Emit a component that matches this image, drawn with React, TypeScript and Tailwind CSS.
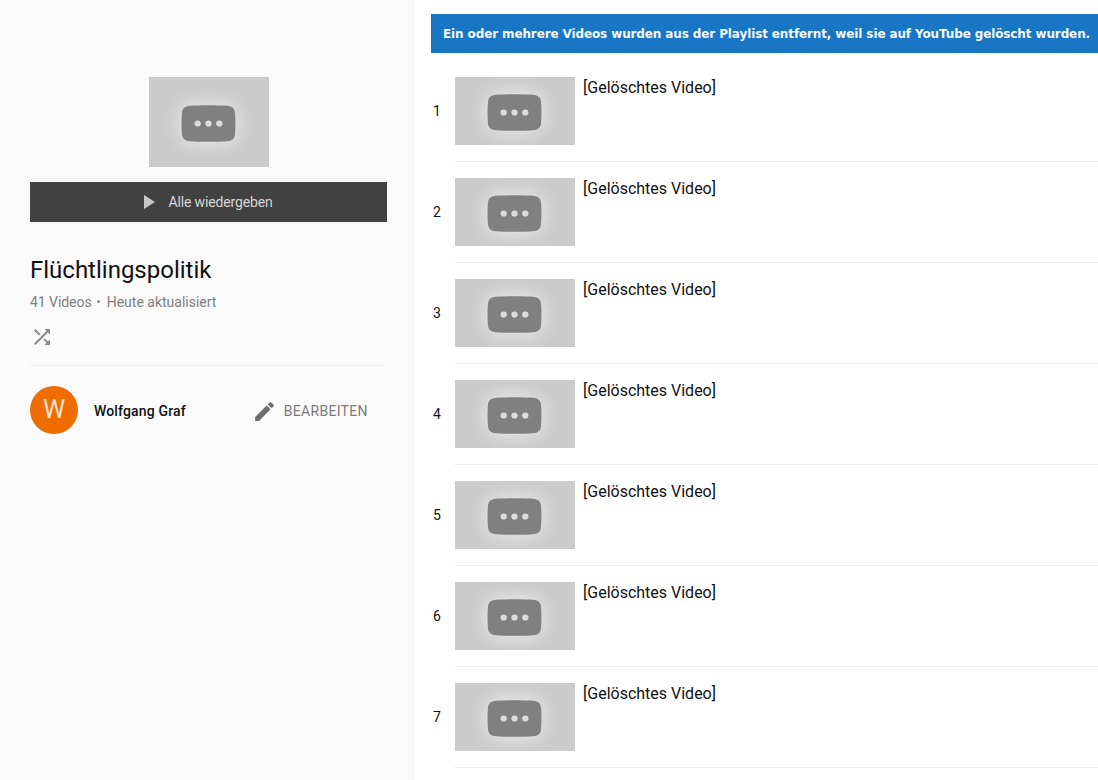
const rows = [1, 2, 3, 4, 5, 6, 7];

function DeletedIcon({ className }: { className: string }) {
  return (
    <svg viewBox="0 0 56 38" preserveAspectRatio="none" className={className}>
      <path
        d="M9 .8C18 .1 38 .1 47 .8c5 .4 7.6 2.6 8 7.2.6 6 .6 16 0 22-.4 4.600-3 6.800-8 7.200-9 .7-29 .7-38 0-5-.4-7.600-2.600-8-7.200C.4 24 .4 14 1 8 1.400 3.400 4 1.200 9 .8z"
        fill="#808080"
      />
      <circle cx="17" cy="19" r="3.200" fill="#dcdcdc" />
      <circle cx="28" cy="19" r="3.200" fill="#dcdcdc" />
      <circle cx="39" cy="19" r="3.200" fill="#dcdcdc" />
    </svg>
  );
}

function Thumb({ tall }: { tall?: boolean }) {
  return (
    <div
      className={`flex w-[120px] shrink-0 items-center justify-center bg-[#cbcbcb] ${
        tall ? "h-[90px]" : "h-[68px]"
      }`}
    >
      <DeletedIcon className="mt-[3px] mr-[2px] h-[37px] w-[55px] drop-shadow-[0_0_10px_rgba(255,255,255,0.75)]" />
    </div>
  );
}

export default function App() {
  return (
    <div className="flex h-[780px] w-[1098px] overflow-hidden bg-white font-['Roboto',sans-serif] text-[#111]">
      <aside className="h-full w-[415px] shrink-0 bg-[#fafafa] pl-[30px] pr-[28px] pt-[77px]">
        <div className="flex justify-center pl-[1px]">
          <Thumb tall />
        </div>
        <div className="mt-[15px] flex h-[40px] w-[357px] items-center justify-center bg-[#414141] text-[14px] tracking-[-0.15px] text-[#d6d6d6]">
          <svg viewBox="0 0 11 14" className="mr-[13px] h-[14px] w-[11px]">
            <path d="M0 0l11 7-11 7z" fill="#c8c8c8" />
          </svg>
          Alle wiedergeben
        </div>
        <h1 className="mt-[33px] text-[24px] leading-[30px] font-normal text-[#111]">Flüchtlingspolitik</h1>
        <div className="mt-[7px] flex h-[20px] items-center text-[14px] text-[#808080]">
          <span className="tracking-[-0.05px]">41 Videos</span>
          <span className="mx-[5px] text-[12px]">•</span>
          <span className="ml-[1px]">Heute aktualisiert</span>
        </div>
        <svg viewBox="0 0 24 24" className="mt-[13px] h-[24px] w-[24px]" fill="#8a8a8a">
          <path d="M10.590 9.170L5.410 4 4 5.410l5.170 5.170 1.420-1.410zM14.500 4l2.040 2.040L4 18.590 5.410 20 17.960 7.460 20 9.500V4h-5.500zm.330 9.410l-1.410 1.410 3.130 3.130L14.500 20H20v-5.500l-2.040 2.040-3.130-3.130z" />
        </svg>
        <div className="mt-[16px] h-px w-[353px] bg-[#ececec]" />
        <div className="mt-[20px] flex h-[48px] w-[357px] items-center">
          <div className="flex h-[48px] w-[48px] items-center justify-center rounded-full bg-[#ef6c00] text-[25px] text-[#fbe3cd]">
            W
          </div>
          <span className="mt-[2px] ml-[16px] text-[14px] font-medium tracking-[0.15px] text-[#111]">Wolfgang Graf</span>
          <svg viewBox="0 0 24 24" className="mt-[2px] ml-[66px] h-[25px] w-[25px]" fill="#6e6e6e">
            <path d="M3 17.250V21h3.750L17.810 9.940l-3.750-3.750L3 17.250zM20.710 7.040a1 1 0 0 0 0-1.410l-2.340-2.340a1 1 0 0 0-1.410 0l-1.830 1.830 3.750 3.750 1.830-1.830z" />
          </svg>
          <span className="mt-[2px] ml-[7px] text-[14px] tracking-[0.3px] text-[#7a7a7a]">BEARBEITEN</span>
        </div>
      </aside>
      <main className="flex-1 bg-white pl-[16px] pt-[14px]">
        <div className="flex h-[39px] items-center bg-[#1976c4] pl-[12px] font-['DejaVu_Sans',sans-serif] text-[12px] font-bold tracking-[-0.12px] whitespace-nowrap text-[#f4f8fc]">
          Ein oder mehrere Videos wurden aus der Playlist entfernt, weil sie auf YouTube gelöscht wurden.
        </div>
        <div className="mt-[24px]">
          {rows.map((n) => (
            <div key={n} className="flex h-[101px]">
              <div className="w-[24px] pt-[26px] pr-[12px] text-center text-[14px] leading-[16px] text-[#111]">{n}</div>
              <div className="flex h-[85px] flex-1 border-b border-[#ececec]">
                <Thumb />
                <div className="ml-[8px] pt-[1px] text-[16px] leading-[20px] text-[#111]">[Gelöschtes Video]</div>
              </div>
            </div>
          ))}
        </div>
      </main>
    </div>
  );
}
